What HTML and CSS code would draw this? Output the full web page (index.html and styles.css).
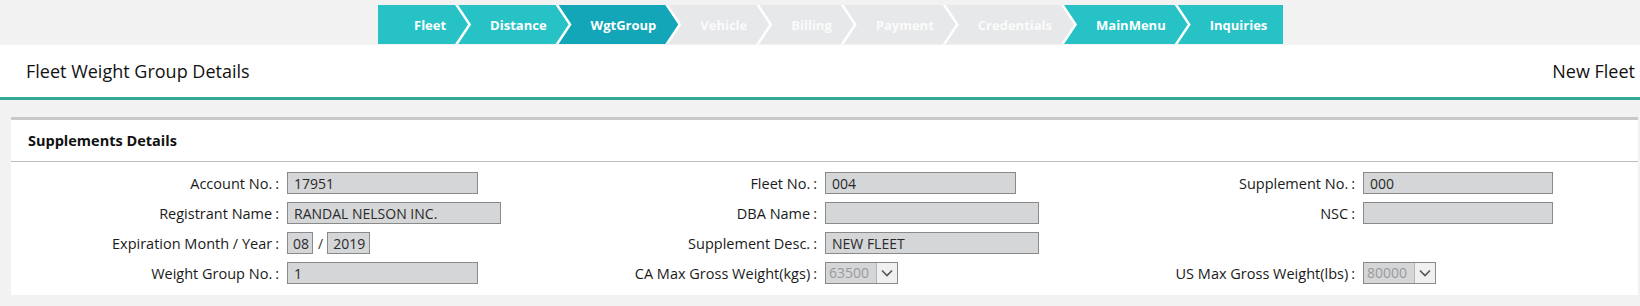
FILE: index.html
```html
<!DOCTYPE html>
<html lang="en">
<head>
<meta charset="utf-8">
<title>Fleet Weight Group Details</title>
<link rel="stylesheet" href="styles.css">
</head>
<body>
<nav class="crumbs">
  <div class="crumb done first">Fleet</div>
  <div class="crumb done">Distance</div>
  <div class="crumb active">WgtGroup</div>
  <div class="crumb todo">Vehicle</div>
  <div class="crumb todo">Billing</div>
  <div class="crumb todo">Payment</div>
  <div class="crumb todo">Credentials</div>
  <div class="crumb done">MainMenu</div>
  <div class="crumb done last">Inquiries</div>
</nav>

<header class="page-head">
  <h1 class="page-title">Fleet Weight Group Details</h1>
  <div class="page-sub">New Fleet</div>
</header>

<section class="panel">
  <div class="panel-head">Supplements Details</div>
  <div class="fields">
    <div class="lbl">Account No.<span class="colon">:</span></div>
    <div class="val"><input class="inp w191" readonly value="17951"></div>
    <div class="lbl">Fleet No.<span class="colon">:</span></div>
    <div class="val"><input class="inp w191" readonly value="004"></div>
    <div class="lbl">Supplement No.<span class="colon">:</span></div>
    <div class="val"><input class="inp w190" readonly value="000"></div>

    <div class="lbl">Registrant Name<span class="colon">:</span></div>
    <div class="val"><input class="inp w214" readonly value="RANDAL NELSON INC."></div>
    <div class="lbl">DBA Name<span class="colon">:</span></div>
    <div class="val"><input class="inp w214" readonly value=""></div>
    <div class="lbl">NSC<span class="colon">:</span></div>
    <div class="val"><input class="inp w190" readonly value=""></div>

    <div class="lbl">Expiration Month / Year<span class="colon">:</span></div>
    <div class="val"><input class="inp w26" readonly value="08"><span class="slash">/</span><input class="inp w43" readonly value="2019"></div>
    <div class="lbl">Supplement Desc.<span class="colon">:</span></div>
    <div class="val"><input class="inp w214" readonly value="NEW FLEET"></div>
    <div class="lbl"></div>
    <div class="val"></div>

    <div class="lbl">Weight Group No.<span class="colon">:</span></div>
    <div class="val"><input class="inp w191" readonly value="1"></div>
    <div class="lbl">CA Max Gross Weight(kgs)<span class="colon">:</span></div>
    <div class="val">
      <div class="sel"><span class="sel-val">63500</span><span class="sel-btn"><svg width="12" height="8" viewBox="0 0 12 8"><path d="M1 1.5 L6 6.5 L11 1.5" fill="none" stroke="#555" stroke-width="1.6"/></svg></span></div>
    </div>
    <div class="lbl">US Max Gross Weight(lbs)<span class="colon">:</span></div>
    <div class="val">
      <div class="sel"><span class="sel-val">80000</span><span class="sel-btn"><svg width="12" height="8" viewBox="0 0 12 8"><path d="M1 1.5 L6 6.5 L11 1.5" fill="none" stroke="#555" stroke-width="1.6"/></svg></span></div>
    </div>
  </div>
</section>
</body>
</html>
```

FILE: styles.css
```css
* { box-sizing: border-box; }

html, body {
  margin: 0;
  padding: 0;
}

body {
  background: #f2f2f3;
  font-family: "Open Sans", "Liberation Sans", sans-serif;
  color: #1a1a1a;
  width: 1640px;
  height: 306px;
  overflow: hidden;
}

/* breadcrumb steps */
.crumbs {
  display: flex;
  width: max-content;
  margin: 5px 0 0 378px;
  height: 39px;
  background: #ffffff;
}

.crumb {
  height: 39px;
  display: flex;
  align-items: center;
  padding: 0 22px 0 32px;
  margin-left: -10px;
  font-size: 13px;
  font-weight: 700;
  color: #ffffff;
  clip-path: polygon(0 0, calc(100% - 13px) 0, 100% 50%, calc(100% - 13px) 100%, 0 100%, 13px 50%);
}

.crumb.first {
  margin-left: 0;
  padding-left: 36px;
  clip-path: polygon(0 0, calc(100% - 13px) 0, 100% 50%, calc(100% - 13px) 100%, 0 100%);
}

.crumb.last {
  padding-right: 16px;
  clip-path: polygon(0 0, 100% 0, 100% 100%, 0 100%, 13px 50%);
}

.crumb.done { background: #27c2c5; }
.crumb.active { background: #12a6b8; }
.crumb.todo { background: #e6e8ea; color: #fbfbfb; }

/* page header */
.page-head {
  margin-top: 1px;
  height: 55px;
  background: #ffffff;
  border-bottom: 3px solid #35a995;
  display: flex;
  align-items: center;
  justify-content: space-between;
  padding: 0 5px 0 26px;
}

.page-title {
  margin: 0;
  font-size: 18px;
  font-weight: 400;
  color: #111;
}

.page-sub {
  font-size: 18px;
  color: #111;
}

/* panel */
.panel {
  margin: 17px 2px 0 11px;
  background: #ffffff;
  border-top: 3px solid #c9c9c9;
}

.panel-head {
  height: 42px;
  display: flex;
  align-items: center;
  padding-left: 17px;
  border-bottom: 1px solid #bdbdbd;
  font-size: 14.5px;
  font-weight: 700;
  color: #111;
}

.fields {
  display: grid;
  grid-template-columns: 268px 270px 268px 270px 268px 270px;
  grid-auto-rows: 30px;
  align-items: center;
  padding: 6px 0 7px 0;
}

.lbl {
  text-align: right;
  font-size: 14.5px;
  color: #1a1a1a;
  white-space: nowrap;
}

.colon {
  margin-left: 3px;
}

.val {
  padding-left: 8px;
  display: flex;
  align-items: center;
}

.inp {
  height: 22px;
  border: 1px solid #8a8a8a;
  background: #d5d6d8;
  font-family: "Open Sans", "Liberation Sans", sans-serif;
  font-size: 14px;
  color: #2a2a2a;
  padding: 0 0 0 6px;
  margin: 0;
  outline: none;
  border-radius: 0;
}

.w191 { width: 191px; }
.w190 { width: 190px; }
.w214 { width: 214px; }
.w26 { width: 26px; padding-left: 5px; }
.w43 { width: 43px; padding-left: 5px; }

.slash {
  font-size: 14px;
  margin: 0 4px 0 5px;
  color: #333;
}

.sel {
  width: 73px;
  height: 22px;
  border: 1px solid #8a8a8a;
  background: #d5d6d8;
  display: flex;
}

.sel-val {
  flex: 1;
  font-size: 14px;
  color: #9a9a9a;
  padding-left: 3px;
  line-height: 20px;
}

.sel-btn {
  width: 21px;
  border-left: 1px solid #b5b5b5;
  background: #f0f0f0;
  display: flex;
  align-items: center;
  justify-content: center;
}
```
